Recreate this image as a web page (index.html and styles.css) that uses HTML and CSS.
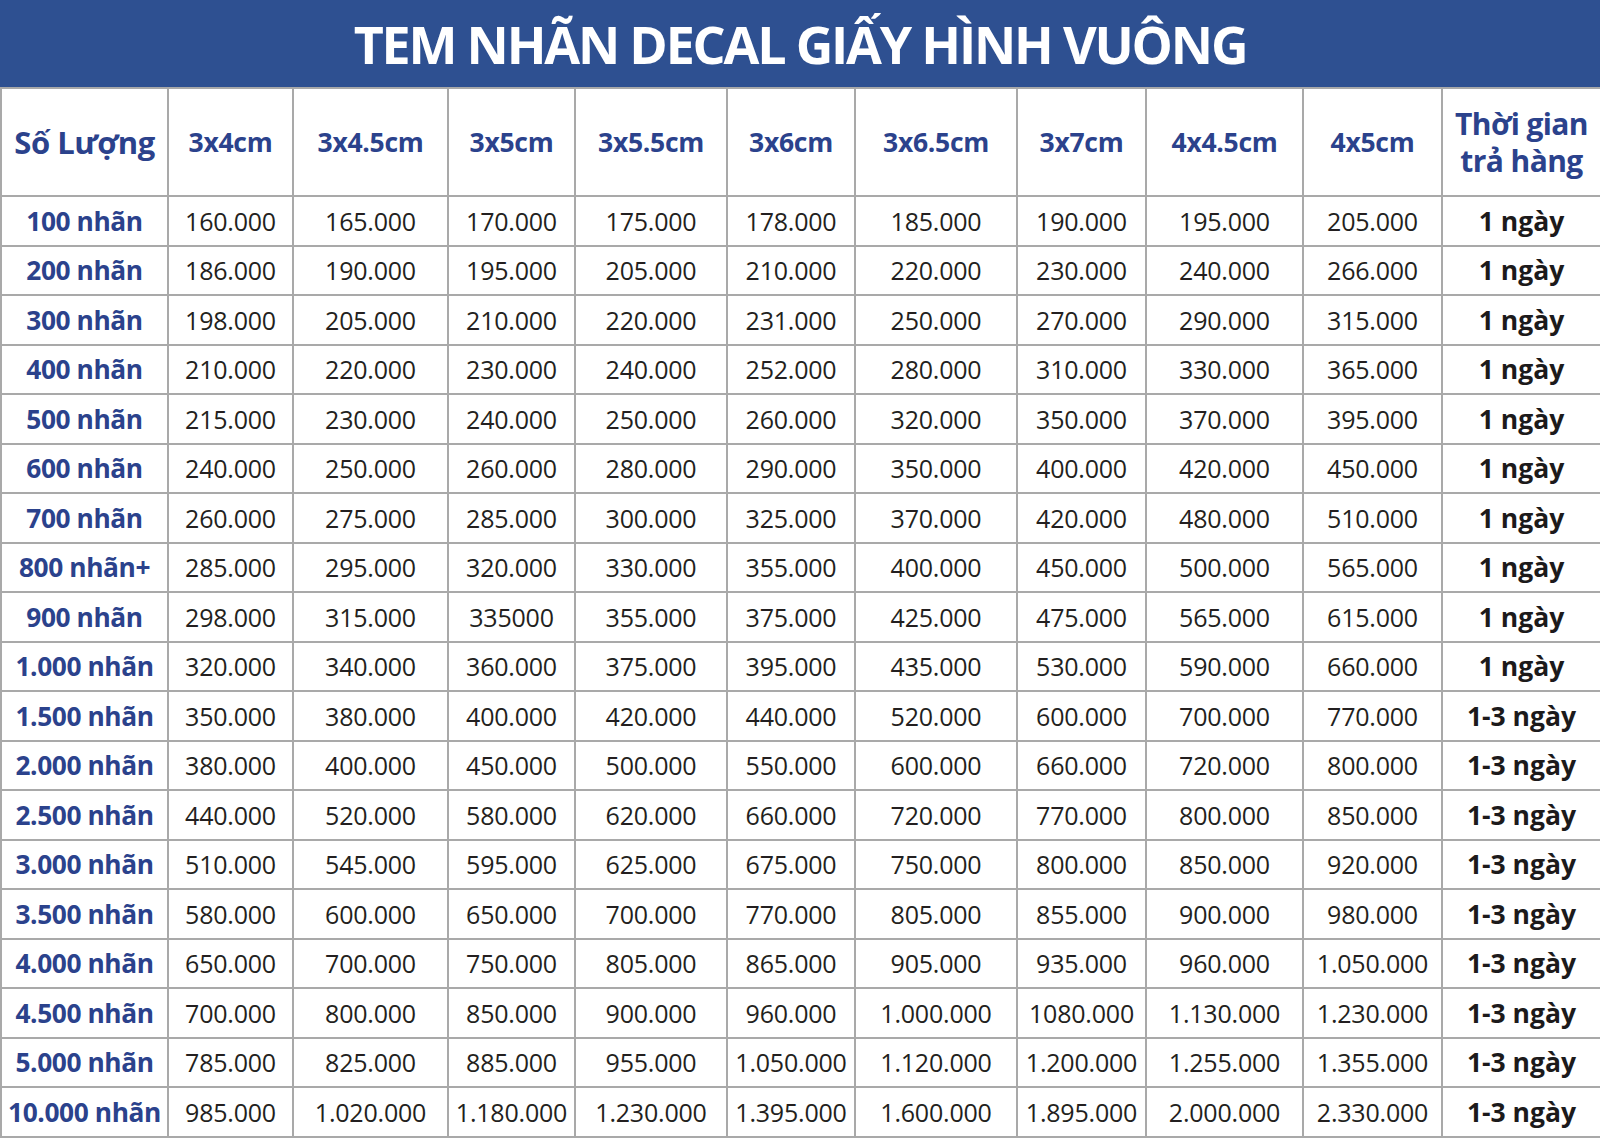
FILE: index.html
```html
<!DOCTYPE html>
<html lang="vi">
<head>
<meta charset="utf-8">
<title>Tem nhãn decal giấy hình vuông</title>
<link rel="stylesheet" href="styles.css">
</head>
<body>
<div class="sheet">
  <div class="title">TEM NHÃN DECAL GIẤY HÌNH VUÔNG</div>
  <table class="price">
    <colgroup>
      <col class="c0"><col class="c1"><col class="c2"><col class="c3"><col class="c4"><col class="c5"><col class="c6"><col class="c7"><col class="c8"><col class="c9"><col class="c10">
    </colgroup>
    <thead>
      <tr>
        <th class="qty-head">Số Lượng</th>
        <th>3x4cm</th><th>3x4.5cm</th><th>3x5cm</th><th>3x5.5cm</th><th>3x6cm</th><th>3x6.5cm</th><th>3x7cm</th><th>4x4.5cm</th><th>4x5cm</th>
        <th class="time-head">Thời gian<br>trả hàng</th>
      </tr>
    </thead>
    <tbody>
      <tr><th>100 nhãn</th><td>160.000</td><td>165.000</td><td>170.000</td><td>175.000</td><td>178.000</td><td>185.000</td><td>190.000</td><td>195.000</td><td>205.000</td><td class="time">1 ngày</td></tr>
      <tr><th>200 nhãn</th><td>186.000</td><td>190.000</td><td>195.000</td><td>205.000</td><td>210.000</td><td>220.000</td><td>230.000</td><td>240.000</td><td>266.000</td><td class="time">1 ngày</td></tr>
      <tr><th>300 nhãn</th><td>198.000</td><td>205.000</td><td>210.000</td><td>220.000</td><td>231.000</td><td>250.000</td><td>270.000</td><td>290.000</td><td>315.000</td><td class="time">1 ngày</td></tr>
      <tr><th>400 nhãn</th><td>210.000</td><td>220.000</td><td>230.000</td><td>240.000</td><td>252.000</td><td>280.000</td><td>310.000</td><td>330.000</td><td>365.000</td><td class="time">1 ngày</td></tr>
      <tr><th>500 nhãn</th><td>215.000</td><td>230.000</td><td>240.000</td><td>250.000</td><td>260.000</td><td>320.000</td><td>350.000</td><td>370.000</td><td>395.000</td><td class="time">1 ngày</td></tr>
      <tr><th>600 nhãn</th><td>240.000</td><td>250.000</td><td>260.000</td><td>280.000</td><td>290.000</td><td>350.000</td><td>400.000</td><td>420.000</td><td>450.000</td><td class="time">1 ngày</td></tr>
      <tr><th>700 nhãn</th><td>260.000</td><td>275.000</td><td>285.000</td><td>300.000</td><td>325.000</td><td>370.000</td><td>420.000</td><td>480.000</td><td>510.000</td><td class="time">1 ngày</td></tr>
      <tr><th>800 nhãn+</th><td>285.000</td><td>295.000</td><td>320.000</td><td>330.000</td><td>355.000</td><td>400.000</td><td>450.000</td><td>500.000</td><td>565.000</td><td class="time">1 ngày</td></tr>
      <tr><th>900 nhãn</th><td>298.000</td><td>315.000</td><td>335000</td><td>355.000</td><td>375.000</td><td>425.000</td><td>475.000</td><td>565.000</td><td>615.000</td><td class="time">1 ngày</td></tr>
      <tr><th>1.000 nhãn</th><td>320.000</td><td>340.000</td><td>360.000</td><td>375.000</td><td>395.000</td><td>435.000</td><td>530.000</td><td>590.000</td><td>660.000</td><td class="time">1 ngày</td></tr>
      <tr><th>1.500 nhãn</th><td>350.000</td><td>380.000</td><td>400.000</td><td>420.000</td><td>440.000</td><td>520.000</td><td>600.000</td><td>700.000</td><td>770.000</td><td class="time">1-3 ngày</td></tr>
      <tr><th>2.000 nhãn</th><td>380.000</td><td>400.000</td><td>450.000</td><td>500.000</td><td>550.000</td><td>600.000</td><td>660.000</td><td>720.000</td><td>800.000</td><td class="time">1-3 ngày</td></tr>
      <tr><th>2.500 nhãn</th><td>440.000</td><td>520.000</td><td>580.000</td><td>620.000</td><td>660.000</td><td>720.000</td><td>770.000</td><td>800.000</td><td>850.000</td><td class="time">1-3 ngày</td></tr>
      <tr><th>3.000 nhãn</th><td>510.000</td><td>545.000</td><td>595.000</td><td>625.000</td><td>675.000</td><td>750.000</td><td>800.000</td><td>850.000</td><td>920.000</td><td class="time">1-3 ngày</td></tr>
      <tr><th>3.500 nhãn</th><td>580.000</td><td>600.000</td><td>650.000</td><td>700.000</td><td>770.000</td><td>805.000</td><td>855.000</td><td>900.000</td><td>980.000</td><td class="time">1-3 ngày</td></tr>
      <tr><th>4.000 nhãn</th><td>650.000</td><td>700.000</td><td>750.000</td><td>805.000</td><td>865.000</td><td>905.000</td><td>935.000</td><td>960.000</td><td>1.050.000</td><td class="time">1-3 ngày</td></tr>
      <tr><th>4.500 nhãn</th><td>700.000</td><td>800.000</td><td>850.000</td><td>900.000</td><td>960.000</td><td>1.000.000</td><td>1080.000</td><td>1.130.000</td><td>1.230.000</td><td class="time">1-3 ngày</td></tr>
      <tr><th>5.000 nhãn</th><td>785.000</td><td>825.000</td><td>885.000</td><td>955.000</td><td>1.050.000</td><td>1.120.000</td><td>1.200.000</td><td>1.255.000</td><td>1.355.000</td><td class="time">1-3 ngày</td></tr>
      <tr><th>10.000 nhãn</th><td>985.000</td><td>1.020.000</td><td>1.180.000</td><td>1.230.000</td><td>1.395.000</td><td>1.600.000</td><td>1.895.000</td><td>2.000.000</td><td>2.330.000</td><td class="time">1-3 ngày</td></tr>
    </tbody>
  </table>
</div>
</body>
</html>
```
FILE: styles.css
```css
html, body {
  margin: 0;
  padding: 0;
  background: #ffffff;
}

.sheet {
  width: 1600px;
  font-family: "Open Sans", "Noto Sans", "DejaVu Sans", sans-serif;
}

.title {
  height: 87px;
  background: #2e5091;
  color: #ffffff;
  font-weight: 700;
  font-size: 52px;
  letter-spacing: -2.2px;
  line-height: 87px;
  text-align: center;
  white-space: nowrap;
}

.price {
  width: 1600px;
  table-layout: fixed;
  border-collapse: collapse;
  border: 2px solid #a9a9a9;
  border-top: none;
}

.c0 { width: 167px; }
.c1 { width: 125px; }
.c2 { width: 155px; }
.c3 { width: 127px; }
.c4 { width: 152px; }
.c5 { width: 128px; }
.c6 { width: 162px; }
.c7 { width: 129px; }
.c8 { width: 157px; }
.c9 { width: 139px; }
.c10 { width: 159px; }

.price th,
.price td {
  border: 2px solid #a9a9a9;
  padding: 0;
  text-align: center;
  vertical-align: middle;
  white-space: nowrap;
}

.price thead tr {
  height: 108px;
}

.price tbody tr {
  height: 49.5px;
}

.price thead th {
  color: #2b428c;
  font-weight: 700;
  font-size: 26.5px;
  line-height: 37px;
  letter-spacing: -0.3px;
}

.price thead th.qty-head {
  font-size: 31px;
  letter-spacing: -0.5px;
}

.price thead th.time-head {
  font-size: 30px;
  letter-spacing: -0.6px;
}

.price tbody th {
  color: #2b428c;
  font-weight: 700;
  font-size: 26.3px;
  letter-spacing: -0.4px;
}

.price td {
  color: #231f20;
  font-weight: 400;
  font-size: 25px;
  letter-spacing: -0.2px;
}

.price td.time {
  color: #1c1a1b;
  font-weight: 700;
  font-size: 26.5px;
  letter-spacing: 0;
}
```
